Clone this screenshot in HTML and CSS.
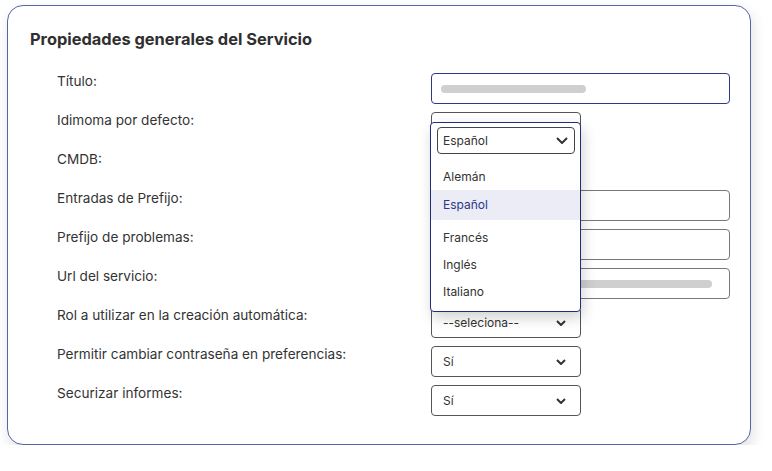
FILE: index.html
```html
<!DOCTYPE html>
<html lang="es">
<head>
  <meta charset="UTF-8">
  <title>Propiedades generales del Servicio</title>
  <link rel="stylesheet" href="styles.css">
</head>
<body>
  <div class="card">
    <h2>Propiedades generales del Servicio</h2>
    <div class="form">
      <label>Título:</label>
      <div class="field"><div class="input active"><span class="bar" style="width:145px"></span></div></div>

      <label>Idimoma por defecto:</label>
      <div class="field">
        <div class="select"></div>
        <div class="dropdown">
          <div class="dd-select">Español
            <svg width="12" height="7" viewBox="0 0 12 7"><polyline points="1,1 6,6 11,1" fill="none" stroke="#333" stroke-width="2"/></svg>
          </div>
          <ul class="options">
            <li>Alemán</li>
            <li class="selected">Español</li>
            <li>Francés</li>
            <li>Inglés</li>
            <li>Italiano</li>
          </ul>
        </div>
      </div>

      <label>CMDB:</label>
      <div class="field"><div class="select"></div></div>

      <label>Entradas de Prefijo:</label>
      <div class="field"><div class="input"></div></div>

      <label>Prefijo de problemas:</label>
      <div class="field"><div class="input"></div></div>

      <label>Url del servicio:</label>
      <div class="field"><div class="input"><span class="bar" style="width:271px"></span></div></div>

      <label>Rol a utilizar en la creación automática:</label>
      <div class="field"><div class="select">--seleciona--
        <svg width="10" height="6" viewBox="0 0 10 6"><polyline points="1,1 5,5 9,1" fill="none" stroke="#333" stroke-width="2"/></svg>
      </div></div>

      <label>Permitir cambiar contraseña en preferencias:</label>
      <div class="field"><div class="select">Sí
        <svg width="10" height="6" viewBox="0 0 10 6"><polyline points="1,1 5,5 9,1" fill="none" stroke="#333" stroke-width="2"/></svg>
      </div></div>

      <label>Securizar informes:</label>
      <div class="field"><div class="select">Sí
        <svg width="10" height="6" viewBox="0 0 10 6"><polyline points="1,1 5,5 9,1" fill="none" stroke="#333" stroke-width="2"/></svg>
      </div></div>
    </div>
  </div>
</body>
</html>
```

FILE: styles.css
```css
body { margin: 0; padding: 5px 0 0 7px; background: #fff; font-family: Inter, "Noto Sans", sans-serif; color: #333; }
.card { box-sizing: border-box; width: 744px; height: 440px; padding: 23px 22px 0 22px; border: 1.5px solid #5565a8; border-radius: 16px; background: #fff; box-shadow: 2px 6px 14px rgba(0, 0, 0, 0.12); }
h2 { margin: 0; font-size: 16.4px; line-height: 20px; font-weight: 700; color: #2f2f2f; }
.form { display: grid; grid-template-columns: 374px 299px; row-gap: 8px; margin: 24px 0 0 27px; }
label { font-size: 13.6px; line-height: 16px; color: #333; }
.field { position: relative; height: 31px; }
.input { box-sizing: border-box; height: 31px; padding-left: 9px; display: flex; align-items: center; border: 1px solid #777; border-radius: 4px; }
.input.active { border-color: #2c3a86; }
.bar { height: 8px; border-radius: 4px; background: #cfcfcf; }
.select { box-sizing: border-box; width: 150px; height: 31px; padding: 0 14px 0 11px; display: flex; align-items: center; justify-content: space-between; border: 1px solid #555; border-radius: 4px; font-size: 12px; color: #333; }
.dropdown { position: absolute; left: -1px; top: 10px; z-index: 2; box-sizing: border-box; width: 151px; height: 190px; padding: 4px 5px 0 6px; border: 1px solid #1f2d7a; border-radius: 4px; background: #fff; box-shadow: 2px 6px 14px rgba(0, 0, 0, 0.18); }
.dd-select { box-sizing: border-box; height: 27px; padding: 0 6px 0 5px; display: flex; align-items: center; justify-content: space-between; border: 1px solid #444; border-radius: 4px; font-size: 12px; }
.options { list-style: none; margin: 9px -5px 0 -6px; padding: 0; font-size: 12px; }
.options li { height: 27px; line-height: 27px; padding-left: 12px; }
.options li.selected { height: 30px; line-height: 30px; margin-bottom: 4px; background: #ebecf6; color: #2b3785; }
```
